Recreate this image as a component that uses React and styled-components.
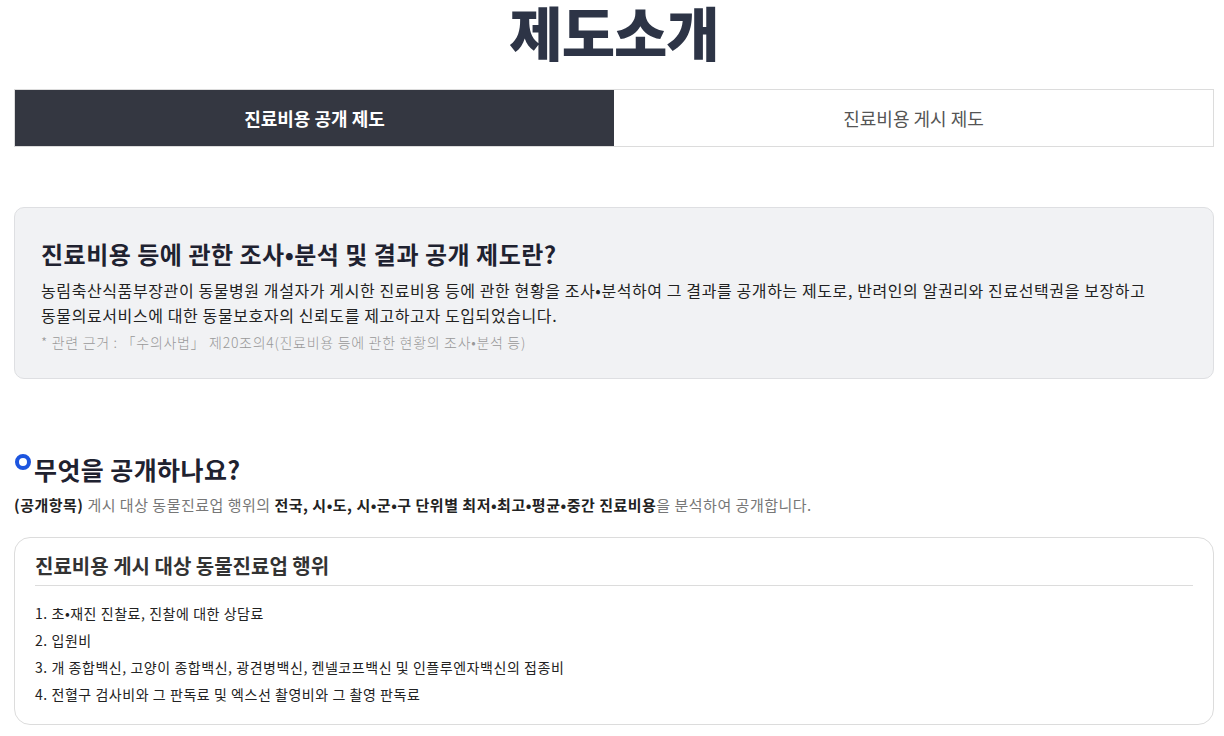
import styled, { createGlobalStyle } from 'styled-components'
import { useState } from 'react'

const GlobalStyle = createGlobalStyle`
    body {
        margin: 0;
        background: #fff;
        font-family: "Noto Sans CJK KR", "Noto Sans", sans-serif;
        color: #222;
    }
    * { box-sizing: border-box; }
`

const Page = styled.main`
    padding: 0 10px 0 14px;
    display: flex;
    flex-direction: column;
`

const PageTitle = styled.h1`
    margin: 0;
    min-height: 62px;
    line-height: 62px;
    text-align: center;
    font-size: 58px;
    font-weight: 900;
    color: #2d3446;
    letter-spacing: -1px;
`

const Tabs = styled.nav`
    display: grid;
    grid-template-columns: 1fr 1fr;
    margin-top: 27px;
    height: 58px;
    border: 1px solid #dcdcdc;
`

const Tab = styled.button`
    border: none;
    margin: 0;
    font-family: inherit;
    font-size: 18px;
    font-weight: ${p => (p.$active ? 700 : 400)};
    background: ${p => (p.$active ? '#343741' : '#fff')};
    color: ${p => (p.$active ? '#fff' : '#555')};
    cursor: pointer;
`

const InfoBox = styled.section`
    margin-top: 60px;
    background: #f1f2f4;
    border: 1px solid #dedfe2;
    border-radius: 10px;
    padding: 29px 26px 25px;
`

const InfoTitle = styled.h2`
    margin: 0;
    font-size: 24px;
    line-height: 34px;
    font-weight: 700;
    color: #1f2230;
    letter-spacing: 0.5px;
`

const InfoText = styled.p`
    margin: 7px 0 0;
    font-size: 16px;
    line-height: 25px;
    color: #222;
    letter-spacing: 0.6px;
`

const Note = styled.p`
    margin: 3px 0 0;
    font-size: 14px;
    line-height: 22px;
    font-weight: 300;
    color: #999;
    letter-spacing: 0.7px;
`

const SectionTitle = styled.h3`
    margin: 73px 0 0;
    display: flex;
    align-items: flex-start;
    font-size: 25px;
    line-height: 34px;
    font-weight: 700;
    color: #1f2230;
    letter-spacing: 0.4px;
`

const Ring = styled.span`
    width: 16px;
    height: 16px;
    margin: 2px 3px 0 1px;
    border: 4px solid #1d55df;
    border-radius: 50%;
    flex-shrink: 0;
`

const Lead = styled.p`
    margin: 8px 0 0;
    font-size: 15px;
    line-height: 22px;
    color: #777;
    letter-spacing: 0.5px;
    b { color: #222; font-weight: 700; }
`

const Card = styled.section`
    margin-top: 21px;
    border: 1px solid #dcdcdc;
    border-radius: 16px;
    padding: 14px 20px 16px;
`

const CardTitle = styled.h4`
    margin: 0;
    padding-bottom: 5px;
    border-bottom: 1px solid #dcdcdc;
    font-size: 20px;
    line-height: 28px;
    font-weight: 700;
    color: #333;
`

const List = styled.ol`
    list-style: none;
    margin: 14px 0 0;
    padding: 0;
`

const Item = styled.li`
    font-size: 14px;
    line-height: 27px;
    color: #222;
    letter-spacing: 0.55px;
`

const items = [
    '1. 초•재진 진찰료, 진찰에 대한 상담료',
    '2. 입원비',
    '3. 개 종합백신, 고양이 종합백신, 광견병백신, 켄넬코프백신 및 인플루엔자백신의 접종비',
    '4. 전혈구 검사비와 그 판독료 및 엑스선 촬영비와 그 촬영 판독료',
]

const App = () => {
    const [tab, setTab] = useState(0)

    return (
        <>
            <GlobalStyle />
            <Page>
                <PageTitle>제도소개</PageTitle>
                <Tabs>
                    <Tab $active={tab === 0} onClick={() => setTab(0)}>진료비용 공개 제도</Tab>
                    <Tab $active={tab === 1} onClick={() => setTab(1)}>진료비용 게시 제도</Tab>
                </Tabs>
                <InfoBox>
                    <InfoTitle>진료비용 등에 관한 조사•분석 및 결과 공개 제도란?</InfoTitle>
                    <InfoText>
                        농림축산식품부장관이 동물병원 개설자가 게시한 진료비용 등에 관한 현황을 조사•분석하여 그 결과를 공개하는 제도로, 반려인의 알권리와 진료선택권을 보장하고<br />
                        동물의료서비스에 대한 동물보호자의 신뢰도를 제고하고자 도입되었습니다.
                    </InfoText>
                    <Note>* 관련 근거 : 「수의사법」 제20조의4(진료비용 등에 관한 현황의 조사•분석 등)</Note>
                </InfoBox>
                <SectionTitle><Ring />무엇을 공개하나요?</SectionTitle>
                <Lead>
                    <b>(공개항목)</b> 게시 대상 동물진료업 행위의 <b>전국, 시•도, 시•군•구 단위별 최저•최고•평균•중간 진료비용</b>을 분석하여 공개합니다.
                </Lead>
                <Card>
                    <CardTitle>진료비용 게시 대상 동물진료업 행위</CardTitle>
                    <List>
                        {items.map(text => <Item key={text}>{text}</Item>)}
                    </List>
                </Card>
            </Page>
        </>
    )
}

export default App
